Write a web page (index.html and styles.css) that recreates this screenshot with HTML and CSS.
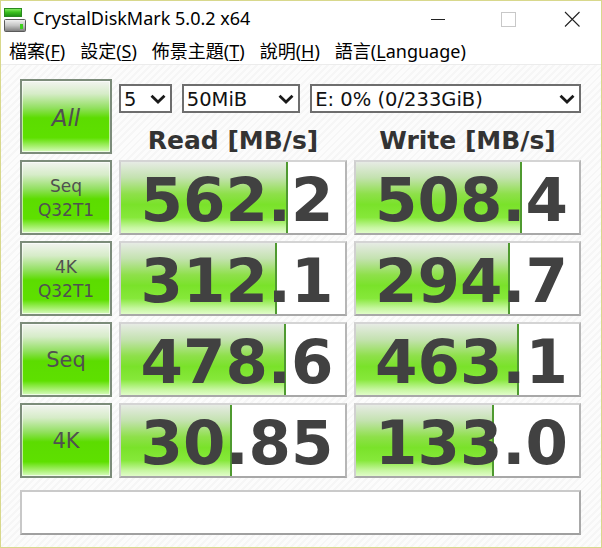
FILE: index.html
```html
<!DOCTYPE html>
<html>
<head>
<meta charset="utf-8">
<link rel="stylesheet" href="styles.css">
</head>
<body>
<div class="window">
  <div class="titlebar">
    <svg class="app-icon" width="24" height="26" viewBox="0 0 24 26">
      <defs>
        <linearGradient id="gbar" x1="0" y1="0" x2="0" y2="1">
          <stop offset="0" stop-color="#8ef06a"/>
          <stop offset="0.45" stop-color="#3cc21e"/>
          <stop offset="1" stop-color="#1e8a14"/>
        </linearGradient>
        <linearGradient id="gbody" x1="0" y1="0" x2="0" y2="1">
          <stop offset="0" stop-color="#f4f4f4"/>
          <stop offset="0.5" stop-color="#c4c4c4"/>
          <stop offset="1" stop-color="#7a7a7a"/>
        </linearGradient>
      </defs>
      <rect x="0.5" y="2.5" width="17" height="8" fill="url(#gbar)" stroke="#2a8a1e" stroke-width="1"/>
      <rect x="0.5" y="13.5" width="21" height="12" rx="1" fill="url(#gbody)" stroke="#5a5a5a" stroke-width="1"/>
      <rect x="16" y="18" width="3" height="5" fill="#3ed01e"/>
    </svg>
    <div class="title">CrystalDiskMark 5.0.2 x64</div>
    <div class="controls">
      <span class="ctl"><svg width="16" height="16" viewBox="0 0 16 16"><line x1="1" y1="8.5" x2="15" y2="8.5" stroke="#222" stroke-width="1"/></svg></span>
      <span class="ctl"><svg width="16" height="16" viewBox="0 0 16 16"><rect x="1.5" y="1.5" width="14" height="14" fill="none" stroke="#c8c8c8" stroke-width="1"/></svg></span>
      <span class="ctl"><svg width="16" height="16" viewBox="0 0 16 16"><path d="M1 1 L15.5 15.5 M15.5 1 L1 15.5" stroke="#222" stroke-width="1.1"/></svg></span>
    </div>
  </div>
  <div class="menubar">
    <span class="menu">檔案(<u>F</u>)</span>
    <span class="menu">設定(<u>S</u>)</span>
    <span class="menu">佈景主題(<u>T</u>)</span>
    <span class="menu">說明(<u>H</u>)</span>
    <span class="menu">語言(<u>L</u>anguage)</span>
  </div>
  <div class="content">
    <div class="grid">
      <div class="btn all">All</div>
      <div class="top">
        <div class="selects">
          <div class="select s1"><span>5</span><svg class="chev" width="16" height="10" viewBox="0 0 16 10"><polyline points="1.5,1.8 8,8 14.5,1.8" fill="none" stroke="#1a1a1a" stroke-width="2.8"/></svg></div>
          <div class="select s2"><span>50MiB</span><svg class="chev" width="16" height="10" viewBox="0 0 16 10"><polyline points="1.5,1.8 8,8 14.5,1.8" fill="none" stroke="#1a1a1a" stroke-width="2.8"/></svg></div>
          <div class="select s3"><span>E: 0% (0/233GiB)</span><svg class="chev" width="16" height="10" viewBox="0 0 16 10"><polyline points="1.5,1.8 8,8 14.5,1.8" fill="none" stroke="#1a1a1a" stroke-width="2.8"/></svg></div>
        </div>
        <div class="heads">
          <div class="head">Read [MB/s]</div>
          <div class="head">Write [MB/s]</div>
        </div>
      </div>

      <div class="btn two"><span>Seq</span><span>Q32T1</span></div>
      <div class="val" style="--w:167px">562.2</div>
      <div class="val" style="--w:166px">508.4</div>

      <div class="btn two"><span>4K</span><span>Q32T1</span></div>
      <div class="val" style="--w:156px">312.1</div>
      <div class="val" style="--w:154px">294.7</div>

      <div class="btn one">Seq</div>
      <div class="val" style="--w:165px">478.6</div>
      <div class="val" style="--w:163px">463.1</div>

      <div class="btn one">4K</div>
      <div class="val" style="--w:111px">30.85</div>
      <div class="val" style="--w:138px">133.0</div>
    </div>
    <div class="comment"></div>
  </div>
</div>
</body>
</html>
```

FILE: styles.css
```css
html, body {
  margin: 0;
  padding: 0;
  background: #ffffff;
}
.window {
  width: 602px;
  height: 548px;
  box-sizing: border-box;
  border: 1px solid #d8d88c;
  display: flex;
  flex-direction: column;
  background: #ffffff;
  overflow: hidden;
}
.titlebar {
  height: 35px;
  display: flex;
  align-items: center;
  flex-shrink: 0;
}
.app-icon {
  margin-left: 3px;
  margin-top: 1px;
}
.title {
  margin-left: 5px;
  font-family: "Noto Sans", "Open Sans", sans-serif;
  font-size: 18px;
  color: #000;
  margin-top: -1px;
}
.controls {
  margin-left: auto;
  display: flex;
  height: 100%;
  align-items: center;
}
.ctl {
  width: 70px;
  display: flex;
  justify-content: center;
  align-items: center;
}
.ctl:last-child { width: 58px; }
.menubar {
  height: 28px;
  display: flex;
  align-items: center;
  padding-left: 8px;
  gap: 15px;
  font-family: "Noto Sans", "Noto Sans CJK TC", sans-serif;
  font-size: 18px;
  color: #000;
  flex-shrink: 0;
}
.menu u { text-decoration-thickness: 1px; text-underline-offset: 2px; }
.content {
  flex: 1;
  border-top: 1px solid #ececec;
  padding: 14px 19px 0 19px;
  background: repeating-linear-gradient(135deg, #f6f6f6 0 2px, #fcfcfc 2px 5px);
}
.grid {
  display: grid;
  grid-template-columns: 92px 228px 227px;
  grid-auto-rows: 75px;
  column-gap: 7px;
  row-gap: 6px;
}
.btn {
  box-sizing: border-box;
  border: 2px solid #7c8c7a;
  background: linear-gradient(to bottom, #f2f4f0 0%, #d6ecc8 18%, #92e060 38%, #5cdc00 52%, #5ee000 80%, #a8f070 92%, #d8fcc0 100%);
  box-shadow: inset 0 0 0 1px rgba(255,255,255,0.6);
  display: flex;
  flex-direction: column;
  align-items: center;
  justify-content: center;
  font-family: "DejaVu Sans", sans-serif;
  color: #505050;
}
.btn.all {
  font-size: 23px;
  font-style: italic;
  padding-top: 2px;
}
.btn.two {
  font-size: 17px;
  line-height: 24px;
}
.btn.one {
  font-size: 21px;
}
.top {
  grid-column: 2 / 4;
  display: flex;
  flex-direction: column;
}
.selects {
  display: flex;
  gap: 10px;
  margin-top: 5px;
}
.select {
  box-sizing: border-box;
  height: 29px;
  border: 2px solid #6e6e6e;
  background: #fff;
  display: flex;
  align-items: center;
  padding-left: 3px;
  padding-right: 4px;
  font-family: "DejaVu Sans", sans-serif;
  font-size: 19.5px;
  color: #111;
}
.select span { padding-top: 1px; }
.select .chev { margin-left: auto; margin-top: 1px; }
.s1 { width: 53px; }
.s2 { width: 119px; }
.s3 { width: 272px; }
.heads {
  display: grid;
  grid-template-columns: 228px 227px;
  column-gap: 7px;
  margin-top: 14px;
}
.head {
  text-align: center;
  font-family: "DejaVu Sans", sans-serif;
  font-weight: bold;
  font-size: 25px;
  line-height: 28px;
  color: #333;
}
.val {
  box-sizing: border-box;
  border: 2px solid;
  border-color: #d4d4d4 #b6b6b6 #a8a8a8 #d0d0d0;
  background:
    linear-gradient(#4f9a30, #4f9a30) no-repeat calc(var(--w) - 2px) 0 / 2px 100%,
    linear-gradient(to bottom, #e6ebe4 0%, #c4e2b0 22%, #8ee04a 45%, #7ae22a 60%, #86e83a 78%, #c6f6a0 92%, #e0fcc8 100%) no-repeat 0 0 / var(--w) 100%,
    #ffffff;
  display: flex;
  align-items: center;
  justify-content: center;
  padding-left: 8px;
  padding-top: 4px;
  font-family: "DejaVu Sans", sans-serif;
  font-weight: bold;
  font-size: 61px;
  line-height: 1;
  color: #414141;
}
.comment {
  margin-top: 12px;
  width: 561px;
  height: 45px;
  box-sizing: border-box;
  border: 2px solid;
  border-color: #cacaca #a8a8a8 #a0a0a0 #c8c8c8;
  background: #ffffff;
}
```
